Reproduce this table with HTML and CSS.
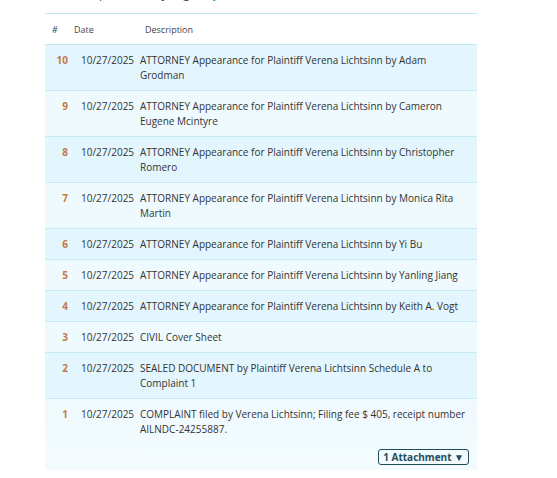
FILE: index.html
```html
<!DOCTYPE html>
<html>
<head>
<meta charset="utf-8">
<link rel="stylesheet" href="styles.css">
</head>
<body>
<div class="wrap">
  <div class="refresh">Last full update: 3 days ago. <span class="update">Update now</span></div>
  <table class="docket">
    <thead>
      <tr><th class="h-num">#</th><th class="h-date">Date</th><th class="h-desc">Description</th></tr>
    </thead>
    <tbody>
      <tr class="even"><td class="num">10</td><td class="date">10/27/2025</td><td class="desc">ATTORNEY Appearance for Plaintiff Verena Lichtsinn by Adam Grodman</td></tr>
      <tr class="odd"><td class="num">9</td><td class="date">10/27/2025</td><td class="desc">ATTORNEY Appearance for Plaintiff Verena Lichtsinn by Cameron Eugene Mcintyre</td></tr>
      <tr class="even"><td class="num">8</td><td class="date">10/27/2025</td><td class="desc">ATTORNEY Appearance for Plaintiff Verena Lichtsinn by Christopher Romero</td></tr>
      <tr class="odd"><td class="num">7</td><td class="date">10/27/2025</td><td class="desc">ATTORNEY Appearance for Plaintiff Verena Lichtsinn by Monica Rita Martin</td></tr>
      <tr class="even"><td class="num">6</td><td class="date">10/27/2025</td><td class="desc">ATTORNEY Appearance for Plaintiff Verena Lichtsinn by Yi Bu</td></tr>
      <tr class="odd"><td class="num">5</td><td class="date">10/27/2025</td><td class="desc">ATTORNEY Appearance for Plaintiff Verena Lichtsinn by Yanling Jiang</td></tr>
      <tr class="even"><td class="num">4</td><td class="date">10/27/2025</td><td class="desc">ATTORNEY Appearance for Plaintiff Verena Lichtsinn by Keith A. Vogt</td></tr>
      <tr class="odd"><td class="num">3</td><td class="date">10/27/2025</td><td class="desc">CIVIL Cover Sheet</td></tr>
      <tr class="even"><td class="num">2</td><td class="date">10/27/2025</td><td class="desc">SEALED DOCUMENT by Plaintiff Verena Lichtsinn Schedule A to Complaint 1</td></tr>
      <tr class="odd last"><td class="num">1</td><td class="date">10/27/2025</td><td class="desc">COMPLAINT filed by Verena Lichtsinn; Filing fee $ 405, receipt number AILNDC-24255887.
        <div class="attach-row"><span class="attach">1 Attachment ▼</span></div></td></tr>
    </tbody>
  </table>
</div>
</body>
</html>
```

FILE: styles.css
```css
html, body {
  margin: 0;
  padding: 0;
  background: #ffffff;
}
body {
  font-family: "Open Sans", "Noto Sans", sans-serif;
  color: #333333;
}
.wrap {
  width: 432px;
  margin-left: 45px;
  margin-top: -14px;
}
.refresh {
  font-size: 12px;
  line-height: 16px;
  height: 27px;
  color: #444;
}
.update {
  color: #1a8fb0;
  font-weight: 700;
}
.docket {
  width: 100%;
  table-layout: fixed;
  border-collapse: collapse;
  border-top: 1px solid #bfe6f2;
  font-size: 10px;
  line-height: 15px;
}
.docket th, .docket td {
  box-sizing: border-box;
}
.docket th {
  font-weight: 400;
  font-size: 9px;
  color: #444;
  text-align: left;
  height: 31px;
  padding: 0;
  border-bottom: 1px solid #bfe6f2;
}
.h-num { width: 28px; padding-left: 7px !important; }
.h-date { width: 63px; padding-left: 1px !important; }
.h-desc { padding-left: 9px !important; }
.docket td {
  vertical-align: top;
  padding: 8px 0 7px 0;
  border-bottom: 1px solid #c9ebf6;
}
.even td { background: #e3f6fd; }
.odd td { background: #effafe; }
.last td { border-bottom: none; padding-bottom: 5px; background: linear-gradient(#effafe, #f3fbfe); }
.num {
  text-align: right;
  padding-right: 5px !important;
  font-weight: 700;
  color: #c07a44;
}
.date {
  padding-left: 8px !important;
  white-space: nowrap;
}
.desc {
  padding-left: 4px !important;
  padding-right: 8px !important;
}
.attach-row {
  display: flex;
  justify-content: flex-end;
  margin-top: 12px;
}
.attach {
  display: inline-block;
  border: 1px solid #1f4d5c;
  border-radius: 3px;
  color: #1f4d5c;
  font-weight: 700;
  font-size: 10px;
  line-height: 14px;
  padding: 0 4px 0 4px;
}
```
